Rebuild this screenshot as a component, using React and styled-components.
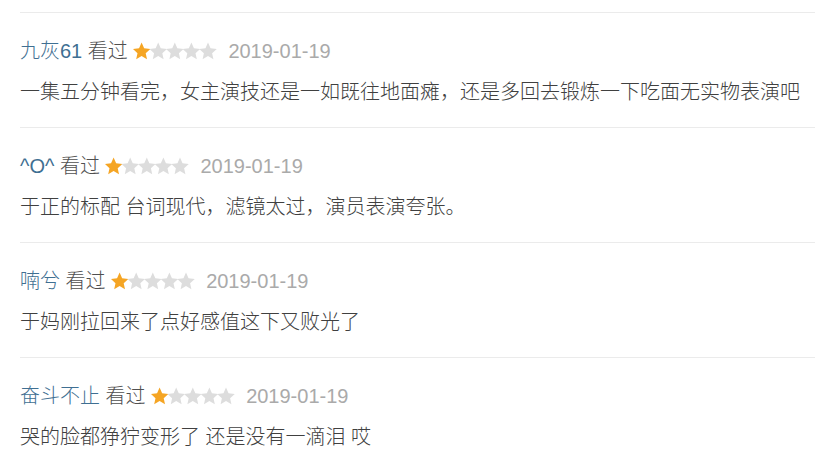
import React from "react";
import styled, { createGlobalStyle } from "styled-components";

const GlobalStyle = createGlobalStyle`
  html, body {
    margin: 0;
    padding: 0;
    background: #fff;
  }
  body {
    font-family: "Liberation Sans", "Noto Sans CJK SC", sans-serif;
  }
`;

const Page = styled.div`
  width: 815px;
  height: 459px;
  overflow: hidden;
  padding: 12px 0 0 20px;
  box-sizing: border-box;
  background: #fff;
`;

const Review = styled.div`
  border-top: 1px solid #ebebeb;
  padding: 24px 0 21px 0;
`;

const Header = styled.div`
  display: flex;
  align-items: center;
  height: 28px;
  font-size: 20px;
  line-height: 28px;
  font-weight: 300;
  white-space: pre;
`;

const Name = styled.span`
  color: #3f6f92;
`;

const Watched = styled.span`
  color: #505050;
`;

const DateText = styled.span`
  color: #aaa;
  margin-left: 11px;
`;

const StarRow = styled.svg`
  display: block;
  margin-top: -1px;
`;

const Body = styled.div`
  margin-top: 13px;
  font-size: 20px;
  line-height: 28px;
  font-weight: 300;
  color: #404040;
  white-space: pre;
`;

const starPoints = (cx, cy, r) => {
  const pts = [];
  for (let i = 0; i < 10; i++) {
    const rad = i % 2 === 0 ? r : r * 0.47;
    const a = -Math.PI / 2 + (i * Math.PI) / 5;
    pts.push(`${(cx + rad * Math.cos(a)).toFixed(2)},${(cy + rad * Math.sin(a)).toFixed(2)}`);
  }
  return pts.join(" ");
};

const Stars = ({ rating }) => (
  <StarRow width="84" height="18" viewBox="0 0 84 18">
    {[0, 1, 2, 3, 4].map((i) => (
      <polygon
        key={i}
        points={starPoints(8.6 + i * 16.6, 9.8, 9.2)}
        fill={i < rating ? "#f5a524" : "#dddddd"}
      />
    ))}
  </StarRow>
);

const reviews = [
  {
    name: "九灰61",
    date: "2019-01-19",
    text: "一集五分钟看完，女主演技还是一如既往地面瘫，还是多回去锻炼一下吃面无实物表演吧",
  },
  {
    name: "^O^",
    date: "2019-01-19",
    text: "于正的标配 台词现代，滤镜太过，演员表演夸张。",
  },
  {
    name: "喃兮",
    date: "2019-01-19",
    text: "于妈刚拉回来了点好感值这下又败光了",
  },
  {
    name: "奋斗不止",
    date: "2019-01-19",
    text: "哭的脸都狰狞变形了 还是没有一滴泪 哎",
  },
];

const App = () => {
  return (
    <Page>
      <GlobalStyle />
      {reviews.map((r) => (
        <Review key={r.name}>
          <Header>
            <Name>{r.name}</Name>
            <Watched> 看过 </Watched>
            <Stars rating={1} />
            <DateText>{r.date}</DateText>
          </Header>
          <Body>{r.text}</Body>
        </Review>
      ))}
    </Page>
  );
};

export default App;
